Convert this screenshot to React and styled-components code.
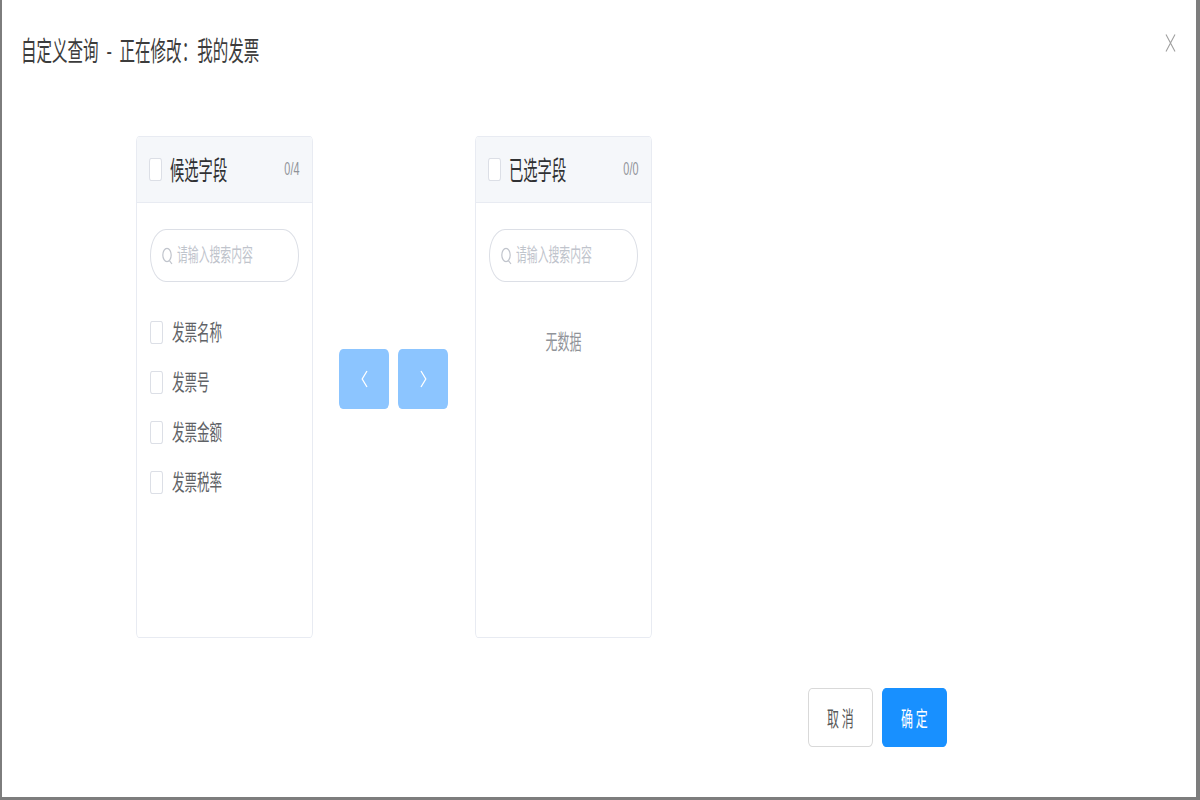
import React from 'react';
import styled, { createGlobalStyle, css } from 'styled-components';

// the shot is squeezed sideways, so text is drawn tall and scaled on x
const SQUASH = 0.57;

const squash = (origin, lift = 0) => css`
  display: inline-block;
  white-space: nowrap;
  transform: translateY(${-lift}px) scaleX(${SQUASH});
  transform-origin: ${origin} center;
`;

const GlobalStyle = createGlobalStyle`
  html, body {
    margin: 0;
    padding: 0;
    background: #7d7d7d;
  }
  body {
    font-family: "Noto Sans CJK SC", "Noto Sans", sans-serif;
  }
`;

const Backdrop = styled.div`
  display: flex;
  width: 1200px;
  height: 800px;
  box-sizing: border-box;
  padding: 0 4px 3px 2px;
  background: #7d7d7d;
`;

const Dialog = styled.div`
  display: flex;
  flex: 1;
  flex-direction: column;
  background: #fff;
`;

const DialogHeader = styled.div`
  display: flex;
  align-items: center;
  justify-content: space-between;
  height: 100px;
  padding: 0 20px 0 19px;
`;

const DialogTitle = styled.span`
  ${squash('left')}
  font-size: 27px;
  line-height: 30px;
  color: #3c3c3c;
  transform: scaleX(0.575);
`;

const CloseButton = styled.button`
  display: flex;
  padding: 0;
  margin-bottom: 15px;
  border: 0;
  background: none;
  cursor: pointer;
`;

const DialogBody = styled.div`
  display: flex;
  flex-direction: column;
  padding: 36px 0 0 134px;
`;

const Transfer = styled.div`
  display: flex;
  align-items: flex-start;
`;

const Panel = styled.div`
  width: 177px;
  height: 502px;
  box-sizing: border-box;
  border: 1px solid #e8ebf2;
  border-radius: 3px / 6px;
  overflow: hidden;
  background: #fff;
`;

const PanelHeader = styled.div`
  display: flex;
  align-items: center;
  height: 66px;
  box-sizing: border-box;
  padding: 0 13px 0 12px;
  border-bottom: 1px solid #e8ebf2;
  background: #f5f7fa;
`;

const Checkbox = styled.span`
  flex: none;
  width: 13px;
  height: 23px;
  box-sizing: border-box;
  border: 1px solid #dcdfe6;
  border-radius: 2px / 4px;
  background: #fff;
`;

const PanelTitle = styled.span`
  ${squash('left', 1)}
  width: 60px;
  margin-left: 8px;
  font-size: 26px;
  line-height: 30px;
  color: #303133;
  transform: translateY(-1px) scaleX(0.55);
`;

const PanelCount = styled.span`
  ${squash('right', 1)}
  margin-left: auto;
  font-family: "Liberation Sans", sans-serif;
  font-size: 19px;
  color: #909399;
`;

const PanelBody = styled.div`
  display: flex;
  flex-direction: column;
  padding: 26px 13px 0 13px;
`;

const SearchBox = styled.div`
  display: flex;
  align-items: center;
  gap: 4px;
  height: 53px;
  box-sizing: border-box;
  padding: 0 0 0 11px;
  border: 1px solid #dcdfe6;
  border-radius: 16px / 26px;
`;

const SearchText = styled.span`
  ${squash('left', 2)}
  width: 76px;
  font-size: 19px;
  color: #c0c4cc;
`;

const ItemList = styled.div`
  display: flex;
  flex-direction: column;
  padding-top: 25px;
`;

const Item = styled.label`
  display: flex;
  align-items: center;
  height: 50px;
`;

const ItemLabel = styled.span`
  ${squash('left', 2)}
  margin-left: 9px;
  font-size: 22px;
  color: #606266;
`;

const EmptyText = styled.div`
  margin-top: 43px;
  line-height: 30px;
  text-align: center;

  span {
    ${squash('center')}
    font-size: 21px;
    color: #909399;
  }
`;

const ArrowGroup = styled.div`
  display: flex;
  gap: 9px;
  margin: 213px 27px 0 26px;
`;

const ArrowButton = styled.button`
  display: flex;
  align-items: center;
  justify-content: center;
  width: 50px;
  height: 60px;
  padding: 0;
  border: 0;
  border-radius: 4px / 6px;
  background: #8cc5ff;
  cursor: not-allowed;
`;

const Footer = styled.div`
  display: flex;
  justify-content: flex-end;
  gap: 9px;
  margin-top: 50px;
  padding-right: 249px;
`;

const FooterButton = styled.button`
  display: flex;
  align-items: center;
  justify-content: center;
  width: 65px;
  height: 59px;
  padding: 0;
  box-sizing: border-box;
  border: 1px solid ${(p) => (p.$primary ? '#1890ff' : '#d9d9d9')};
  border-radius: 4px / 6px;
  background: ${(p) => (p.$primary ? '#1890ff' : '#fff')};
  color: ${(p) => (p.$primary ? '#fff' : '#595959')};
  cursor: pointer;

  span {
    ${squash('center', 1)}
    font-family: "Noto Sans CJK SC", sans-serif;
    font-size: 21px;
  }
`;

const CloseIcon = () => (
  <svg width="11" height="20" viewBox="0 0 11 20">
    <path d="M1 1.5 L10 18.5 M10 1.5 L1 18.5" stroke="#a0a0a0" strokeWidth="1.1" fill="none" />
  </svg>
);

const SearchIcon = () => (
  <svg width="11" height="18" viewBox="0 0 11 18">
    <ellipse cx="5" cy="8" rx="4.2" ry="6.6" stroke="#c0c4cc" strokeWidth="1.2" fill="none" />
    <path d="M7.4 13.6 L10 17" stroke="#c0c4cc" strokeWidth="1.2" fill="none" />
  </svg>
);

const Chevron = ({ dir }) => (
  <svg width="7" height="18" viewBox="0 0 7 18">
    <path
      d={dir === 'left' ? 'M6 1 L1.2 9 L6 17' : 'M1 1 L5.8 9 L1 17'}
      stroke="#fff"
      strokeWidth="1.3"
      fill="none"
    />
  </svg>
);

const candidates = ['发票名称', '发票号', '发票金额', '发票税率'];

const TransferPanel = ({ title, count, items }) => (
  <Panel>
    <PanelHeader>
      <Checkbox />
      <PanelTitle>{title}</PanelTitle>
      <PanelCount>{count}</PanelCount>
    </PanelHeader>
    <PanelBody>
      <SearchBox>
        <SearchIcon />
        <SearchText>请输入搜索内容</SearchText>
      </SearchBox>
      {items.length ? (
        <ItemList>
          {items.map((item) => (
            <Item key={item}>
              <Checkbox />
              <ItemLabel>{item}</ItemLabel>
            </Item>
          ))}
        </ItemList>
      ) : (
        <EmptyText>
          <span>无数据</span>
        </EmptyText>
      )}
    </PanelBody>
  </Panel>
);

const App = () => (
  <>
    <GlobalStyle />
    <Backdrop>
      <Dialog>
        <DialogHeader>
          <DialogTitle>{'自定义查询\u2002-\u2002正在修改：我的发票'}</DialogTitle>
          <CloseButton aria-label="close">
            <CloseIcon />
          </CloseButton>
        </DialogHeader>
        <DialogBody>
          <Transfer>
            <TransferPanel title="候选字段" count="0/4" items={candidates} />
            <ArrowGroup>
              <ArrowButton>
                <Chevron dir="left" />
              </ArrowButton>
              <ArrowButton>
                <Chevron dir="right" />
              </ArrowButton>
            </ArrowGroup>
            <TransferPanel title="已选字段" count="0/0" items={[]} />
          </Transfer>
          <Footer>
            <FooterButton>
              <span>取 消</span>
            </FooterButton>
            <FooterButton $primary>
              <span>确 定</span>
            </FooterButton>
          </Footer>
        </DialogBody>
      </Dialog>
    </Backdrop>
  </>
);

export default App;
